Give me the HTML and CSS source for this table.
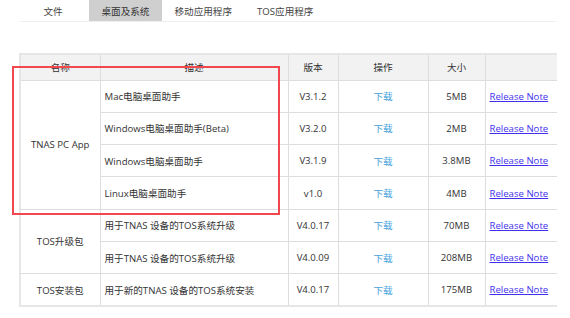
FILE: index.html
```html
<!DOCTYPE html>
<html lang="zh-CN">
<head>
<meta charset="utf-8">
<title>下载中心</title>
<link rel="stylesheet" href="styles.css">
</head>
<body>
<div class="page">
  <nav class="tabs">
    <a class="tab first">文件</a>
    <a class="tab active">桌面及系统</a>
    <a class="tab">移动应用程序</a>
    <a class="tab">TOS应用程序</a>
  </nav>

  <div class="table-wrap">
    <table class="downloads">
      <colgroup>
        <col class="c-name"><col class="c-desc"><col class="c-ver"><col class="c-op"><col class="c-size"><col class="c-note">
      </colgroup>
      <thead>
        <tr><th>名称</th><th>描述</th><th>版本</th><th>操作</th><th>大小</th><th class="last"></th></tr>
      </thead>
      <tbody>
        <tr>
          <td class="name" rowspan="4">TNAS PC App</td>
          <td class="desc">Mac电脑桌面助手</td><td class="ver">V3.1.2</td>
          <td class="op"><a>下载</a></td><td class="size">5MB</td>
          <td class="last"><a class="note" href="#">Release Note</a></td>
        </tr>
        <tr>
          <td class="desc">Windows电脑桌面助手(Beta)</td><td class="ver">V3.2.0</td>
          <td class="op"><a>下载</a></td><td class="size">2MB</td>
          <td class="last"><a class="note" href="#">Release Note</a></td>
        </tr>
        <tr>
          <td class="desc">Windows电脑桌面助手</td><td class="ver">V3.1.9</td>
          <td class="op"><a>下载</a></td><td class="size">3.8MB</td>
          <td class="last"><a class="note" href="#">Release Note</a></td>
        </tr>
        <tr>
          <td class="desc">Linux电脑桌面助手</td><td class="ver">v1.0</td>
          <td class="op"><a>下载</a></td><td class="size">4MB</td>
          <td class="last"><a class="note" href="#">Release Note</a></td>
        </tr>
        <tr>
          <td class="name" rowspan="2">TOS升级包</td>
          <td class="desc">用于TNAS 设备的TOS系统升级</td><td class="ver">V4.0.17</td>
          <td class="op"><a>下载</a></td><td class="size">70MB</td>
          <td class="last"><a class="note" href="#">Release Note</a></td>
        </tr>
        <tr>
          <td class="desc">用于TNAS 设备的TOS系统升级</td><td class="ver">V4.0.09</td>
          <td class="op"><a>下载</a></td><td class="size">208MB</td>
          <td class="last"><a class="note" href="#">Release Note</a></td>
        </tr>
        <tr>
          <td class="name">TOS安装包</td>
          <td class="desc">用于新的TNAS 设备的TOS系统安装</td><td class="ver">V4.0.17</td>
          <td class="op"><a>下载</a></td><td class="size">175MB</td>
          <td class="last"><a class="note" href="#">Release Note</a></td>
        </tr>
      </tbody>
    </table>
    <div class="highlight"></div>
  </div>
</div>
</body>
</html>
```

FILE: styles.css
```css
* { box-sizing: border-box; }

html, body {
  margin: 0;
  background: #fff;
}

body {
  font-family: "Open Sans", "Noto Sans CJK SC", sans-serif;
  font-size: 9.6px;
  color: #333;
}

.page {
  padding-left: 20px;
  width: 556px;
}

/* tab bar */
.tabs {
  display: flex;
  height: 22px;
  border-bottom: 1px solid #efefef;
}

.tab {
  min-width: 72px;
  padding: 0 12.5px;
  height: 21px;
  display: flex;
  align-items: center;
  justify-content: center;
  color: #444;
  cursor: pointer;
}

.tab.first { margin-left: -3px; }

.tab.active {
  background: #cfcfcf;
  color: #333;
}

/* download table */
.table-wrap {
  position: relative;
  margin-top: 31px;
  margin-left: -1px;
}

.downloads {
  border-collapse: collapse;
  table-layout: fixed;
  width: 537px;
  border-top: 2px solid #e6e6e6;
  border-left: 2px solid #e6e6e6;
  border-bottom: 2px solid #e6e6e6;
}

.c-name { width: 80px; }
.c-desc { width: 188px; }
.c-ver  { width: 50px; }
.c-op   { width: 90px; }
.c-size { width: 57px; }
.c-note { width: 72px; }

.downloads th,
.downloads td {
  border: 1px solid #dedede;
  padding: 0 4px;
  white-space: nowrap;
}

.downloads th {
  height: 26px;
  background: #f2f2f2;
  font-weight: normal;
  text-align: center;
  color: #333;
}

.downloads td {
  height: 32.3px;
}

.downloads .last {
  border-right: 0 none;
}

.name { text-align: center; padding-left: 7px; }
.desc { text-align: left; }
.ver  { text-align: center; }
.size { text-align: center; }

.op {
  text-align: center;
  padding-left: 18px;
}

.op a {
  color: #45a2da;
  cursor: pointer;
}

.note {
  color: #3f31ee;
  text-decoration: underline;
}

/* red call-out frame around the PC app rows */
.highlight {
  position: absolute;
  left: -7px;
  top: 12.5px;
  width: 267.5px;
  height: 149px;
  border: 2.6px solid #f2474c;
  pointer-events: none;
}
```
